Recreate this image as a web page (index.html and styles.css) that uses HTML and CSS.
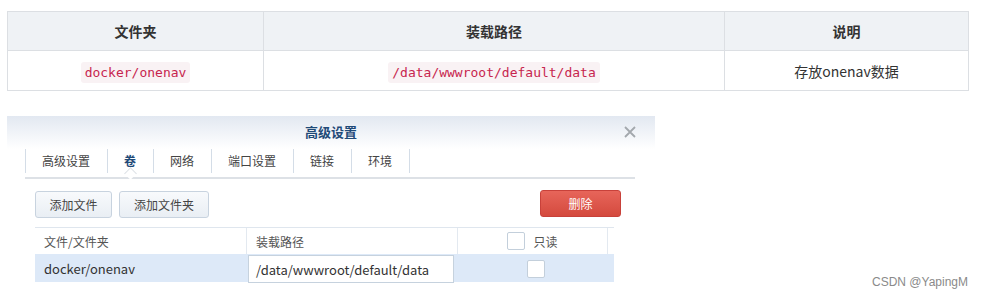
FILE: index.html
```html
<!DOCTYPE html>
<html lang="zh">
<head>
  <meta charset="UTF-8">
  <title>卷映射</title>
  <link rel="stylesheet" href="styles.css">
</head>
<body>
<table class="doc">
  <tr><th class="c1">文件夹</th><th class="c2">装载路径</th><th>说明</th></tr>
  <tr>
    <td><code>docker/onenav</code></td>
    <td><code>/data/wwwroot/default/data</code></td>
    <td>存放onenav数据</td>
  </tr>
</table>

<div class="dialog">
  <div class="dlg-title">
    高级设置
    <span class="close">
      <svg width="14" height="14" viewBox="0 0 14 14"><path d="M2 2 L12 12 M12 2 L2 12" stroke="#a3a8ad" stroke-width="1.8"/></svg>
    </span>
  </div>
  <div class="tabs">
    <span class="tab">高级设置</span>
    <span class="tab active">卷</span>
    <span class="tab">网络</span>
    <span class="tab">端口设置</span>
    <span class="tab">链接</span>
    <span class="tab">环境</span>
  </div>
  <div class="toolbar">
    <button class="btn w1">添加文件</button>
    <button class="btn w2">添加文件夹</button>
    <button class="btn danger">删除</button>
  </div>
  <div class="grid">
    <div class="g-head">
      <div class="cell">文件/文件夹</div>
      <div class="cell">装载路径</div>
      <div class="cell center"><span class="box"></span>只读</div>
      <div class="cell"></div>
    </div>
    <div class="g-row">
      <div class="cell latin">docker/onenav</div>
      <div class="cell input latin">/data/wwwroot/default/data</div>
      <div class="cell center"><span class="box"></span></div>
    </div>
  </div>
</div>

<div class="mark">CSDN @YapingM</div>
</body>
</html>
```

FILE: styles.css
```css
body {
  margin: 0;
  font-family: "Noto Sans CJK SC", "Open Sans", sans-serif;
  color: #333;
  background: #fff;
  position: relative;
  width: 982px;
  height: 299px;
  overflow: hidden;
}
.doc {
  margin: 11px 0 0 7px;
  width: 962px;
  border-collapse: collapse;
  font-size: 14px;
}
.doc th, .doc td {
  border: 1px solid #dcdfe3;
  text-align: center;
  padding: 0;
}
.doc th {
  background: #eff2f5;
  height: 38px;
  font-weight: bold;
  color: #333;
}
.doc td {
  height: 39px;
}
.doc .c1 { width: 255px; }
.doc .c2 { width: 460px; }
code {
  font-family: "DejaVu Sans Mono", monospace;
  font-size: 13px;
  color: #c7254e;
  background: #f9f2f4;
  padding: 3px 4px;
  border-radius: 3px;
}

.dialog {
  margin: 25px 0 0 7px;
  width: 648px;
  font-size: 12px;
}
.dlg-title {
  height: 33px;
  line-height: 32px;
  text-align: center;
  font-size: 13px;
  font-weight: bold;
  color: #1f4a78;
  background: linear-gradient(#e2e8f1, #fff);
  position: relative;
}
.close {
  position: absolute;
  right: 18px;
  top: 9px;
  height: 14px;
  line-height: 0;
}
.tabs {
  margin: 0 20px 0 18px;
  display: flex;
  height: 28px;
  border-bottom: 2px solid #dde1e6;
  position: relative;
}
.tab {
  padding: 0 17px 0 16px;
  height: 24px;
  line-height: 24px;
  border-left: 1px solid #d4dde7;
  color: #444;
  position: relative;
}
.tab:last-child {
  border-right: 1px solid #d4dde7;
}
.tab.active {
  color: #1f4a78;
  font-weight: bold;
}
.tab.active::after {
  content: "";
  position: absolute;
  left: 18px;
  bottom: -5px;
  width: 8px;
  height: 8px;
  background: #fff;
  border-left: 1px solid #dde1e6;
  border-top: 1px solid #dde1e6;
  transform: rotate(45deg);
}
.toolbar {
  display: flex;
  gap: 7px;
  margin: 12px 34px 0 28px;
  height: 28px;
}
.btn {
  font-family: inherit;
  font-size: 12px;
  height: 27px;
  border: 1px solid #c8d3df;
  border-radius: 3px;
  background: linear-gradient(#f8fafc, #e9eef4);
  color: #444;
  padding: 0;
}
.btn.w1 { width: 77px; }
.btn.w2 { width: 90px; }
.btn.danger {
  margin-left: auto;
  margin-top: -1px;
  width: 81px;
  color: #fff;
  border-color: #c8413a;
  background: linear-gradient(#e7655a, #d44a3e);
}
.grid {
  margin: 8px 0 0 28px;
  width: 579px;
}
.g-head {
  display: grid;
  grid-template-columns: 212px 211px 150px 6px;
  height: 26px;
  border-top: 1px solid #dfe6ee;
  color: #555;
}
.g-head .cell {
  border-right: 1px solid #e3e9f0;
}
.g-head .cell:last-child { border-right: none; }
.g-row {
  display: grid;
  grid-template-columns: 212px 211px 156px;
  height: 28px;
  background: #dde9f8;
}
.cell {
  padding-left: 9px;
  display: flex;
  align-items: center;
}
.cell.latin {
  font-size: 13px;
}
.cell.center {
  justify-content: center;
  padding-left: 0;
}
.cell.input {
  background: #fff;
  border: 1px solid #c6d2de;
  margin: 1px 4px 0 1px;
  padding-left: 7px;
  height: 26px;
  color: #333;
}
.g-row .cell:first-child { color: #333; }
.box {
  display: inline-block;
  width: 16px;
  height: 16px;
  border: 1px solid #c3cfdb;
  background: #fff;
  border-radius: 2px;
  margin-right: 8px;
}
.g-row .box { margin-right: 0; }
.mark {
  position: absolute;
  right: 14px;
  top: 275px;
  font-family: "Liberation Sans", sans-serif;
  font-size: 12px;
  color: #8a8a8a;
}
```
